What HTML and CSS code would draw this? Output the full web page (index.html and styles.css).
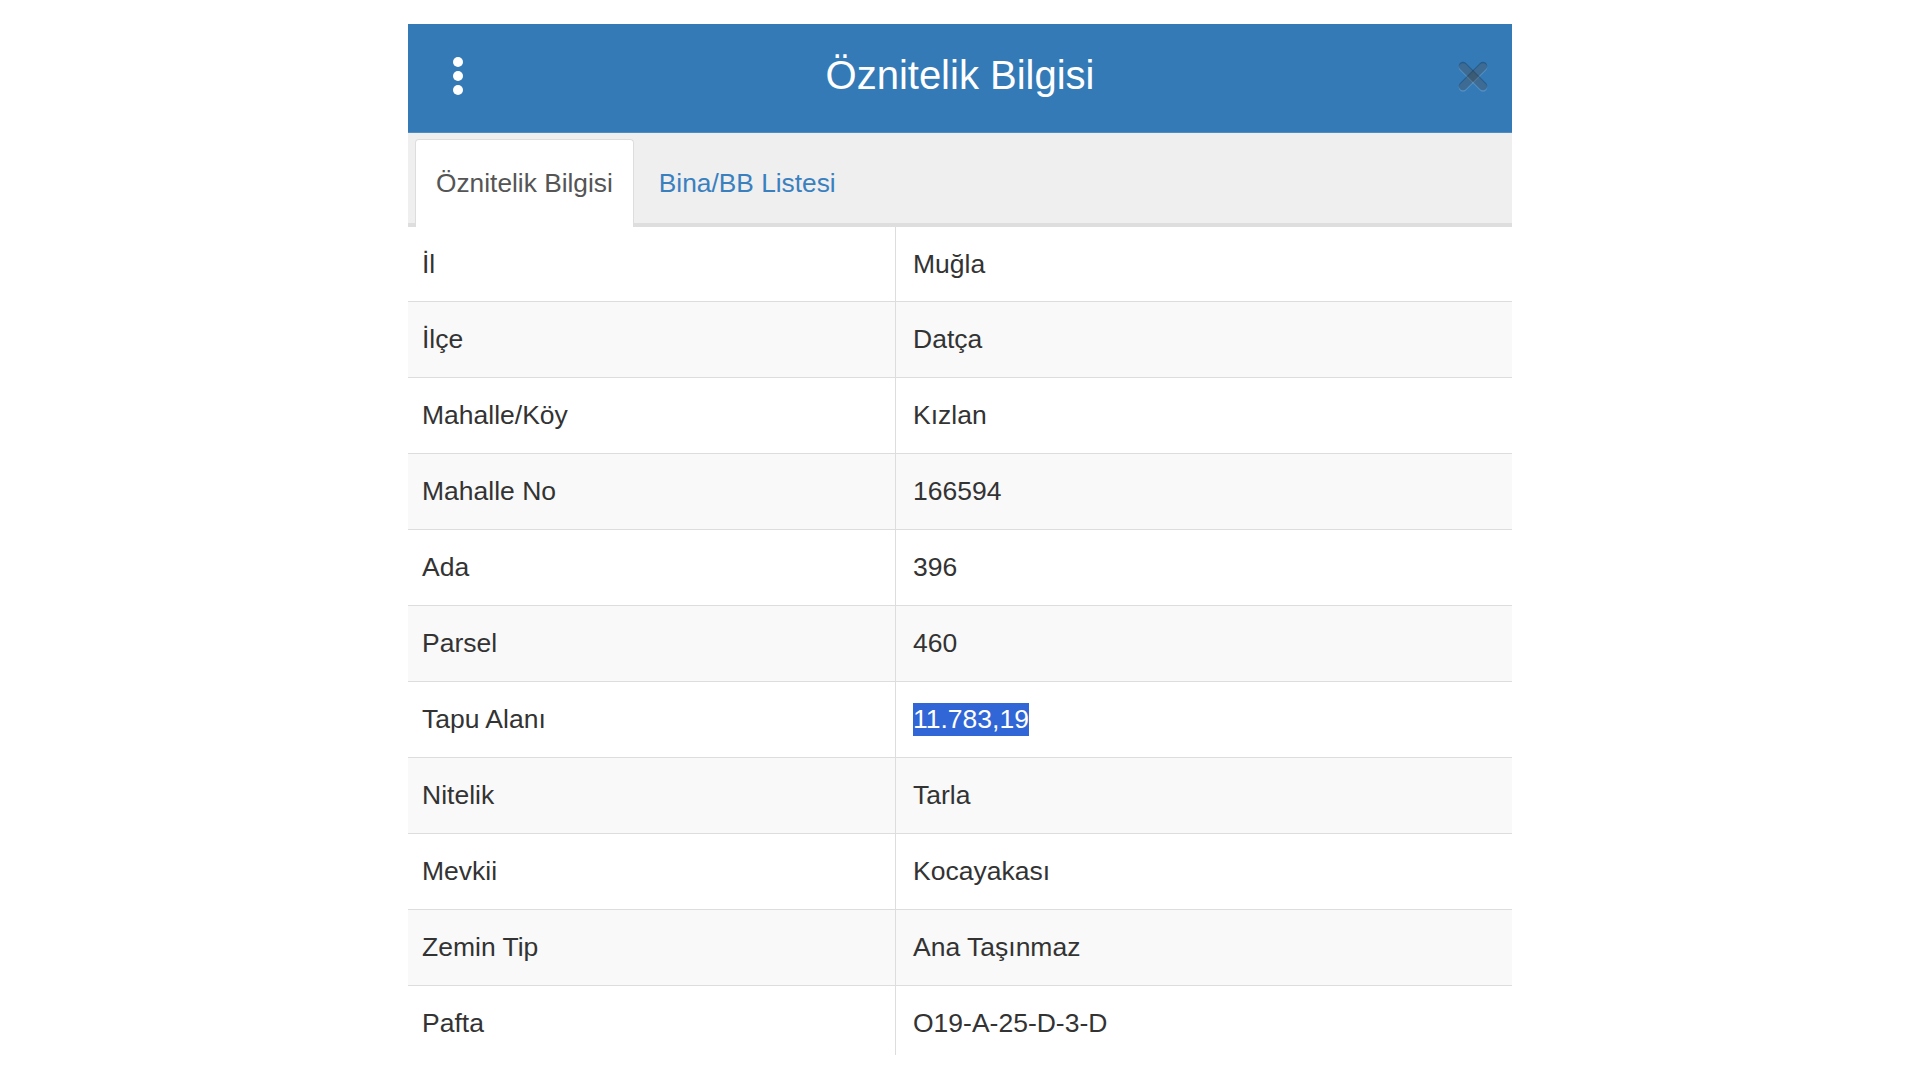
FILE: index.html
```html
<!DOCTYPE html>
<html lang="tr">
<head>
<meta charset="utf-8">
<title>Öznitelik Bilgisi</title>
<link rel="stylesheet" href="styles.css">
</head>
<body>
<div class="panel">
  <header class="panel-head">
    <span class="kebab" aria-label="menu">
      <svg width="12" height="40" viewBox="0 0 12 40"><circle cx="6" cy="6" r="5" fill="#fff"/><circle cx="6" cy="20" r="5" fill="#fff"/><circle cx="6" cy="34" r="5" fill="#fff"/></svg>
    </span>
    <h1 class="title">Öznitelik Bilgisi</h1>
    <span class="close" aria-label="kapat">
      <svg width="30" height="32" viewBox="0 0 30 32">
        <g stroke="#ffffff" stroke-opacity="0.15" stroke-width="8.5" stroke-linecap="round"><line x1="5" y1="6.5" x2="25" y2="26.5"/><line x1="25" y1="6.5" x2="5" y2="26.5"/></g>
        <g stroke="#000000" stroke-opacity="0.24" stroke-width="8.5" stroke-linecap="round"><line x1="5" y1="5" x2="25" y2="25"/><line x1="25" y1="5" x2="5" y2="25"/></g>
      </svg>
    </span>
  </header>
  <nav class="tabs">
    <span class="tab active">Öznitelik Bilgisi</span>
    <span class="tab">Bina/BB Listesi</span>
  </nav>
  <div class="table">
    <div class="row"><div class="key">İl</div><div class="val">Muğla</div></div>
    <div class="row alt"><div class="key">İlçe</div><div class="val">Datça</div></div>
    <div class="row"><div class="key">Mahalle/Köy</div><div class="val">Kızlan</div></div>
    <div class="row alt"><div class="key">Mahalle No</div><div class="val">166594</div></div>
    <div class="row"><div class="key">Ada</div><div class="val">396</div></div>
    <div class="row alt"><div class="key">Parsel</div><div class="val">460</div></div>
    <div class="row"><div class="key">Tapu Alanı</div><div class="val"><span class="sel">11.783,19</span></div></div>
    <div class="row alt"><div class="key">Nitelik</div><div class="val">Tarla</div></div>
    <div class="row"><div class="key">Mevkii</div><div class="val">Kocayakası</div></div>
    <div class="row alt"><div class="key">Zemin Tip</div><div class="val">Ana Taşınmaz</div></div>
    <div class="row"><div class="key">Pafta</div><div class="val">O19-A-25-D-3-D</div></div>
  </div>
</div>
</body>
</html>
```
FILE: styles.css
```css
html, body {
  margin: 0;
  padding: 0;
  background: #ffffff;
}
body {
  font-family: "Liberation Sans", Arial, sans-serif;
  color: #333333;
  padding-top: 24px;
}
.panel {
  width: 1104px;
  height: 1031px;
  margin: 0 auto;
  overflow: hidden;
  background: #ffffff;
}
.panel-head {
  height: 109px;
  box-sizing: border-box;
  padding-bottom: 6px;
  background: #337ab7;
  border-bottom: 1px solid #4d8cc4;
  display: grid;
  grid-template-columns: 100px 1fr 100px;
  align-items: center;
}
.kebab {
  justify-self: center;
  display: flex;
  margin-top: 2px;
}
.title {
  margin: 0;
  text-align: center;
  color: #ffffff;
  font-weight: normal;
  font-size: 40px;
  line-height: 46px;
}
.close {
  justify-self: end;
  margin-right: 24px;
  display: flex;
  margin-top: 4px;
}
.tabs {
  background: #efefef;
  border-bottom: 4px solid #dedede;
  padding: 6px 0 0 7px;
  display: flex;
  gap: 4px;
}
.tab {
  height: 88px;
  box-sizing: border-box;
  margin-bottom: -4px;
  padding: 0 20px;
  display: flex;
  align-items: center;
  font-size: 26.3px;
  color: #3a80bf;
  border: 1px solid transparent;
  border-bottom: none;
  border-radius: 4px 4px 0 0;
}
.tab.active {
  background: #ffffff;
  color: #555555;
  border-color: #dddddd;
}
.row {
  display: grid;
  grid-template-columns: 487px 1fr;
  height: 75px;
  border-bottom: 1px solid #dddddd;
  font-size: 26.5px;
}
.row:first-child {
  height: 74px;
}
.row.alt {
  background: #f9f9f9;
}
.key {
  display: flex;
  align-items: center;
  padding-left: 14px;
}
.val {
  display: flex;
  align-items: center;
  padding-left: 17px;
  border-left: 1px solid #dddddd;
}
.sel {
  background: #3166d6;
  color: #ffffff;
  padding: 1px 0;
}
```
